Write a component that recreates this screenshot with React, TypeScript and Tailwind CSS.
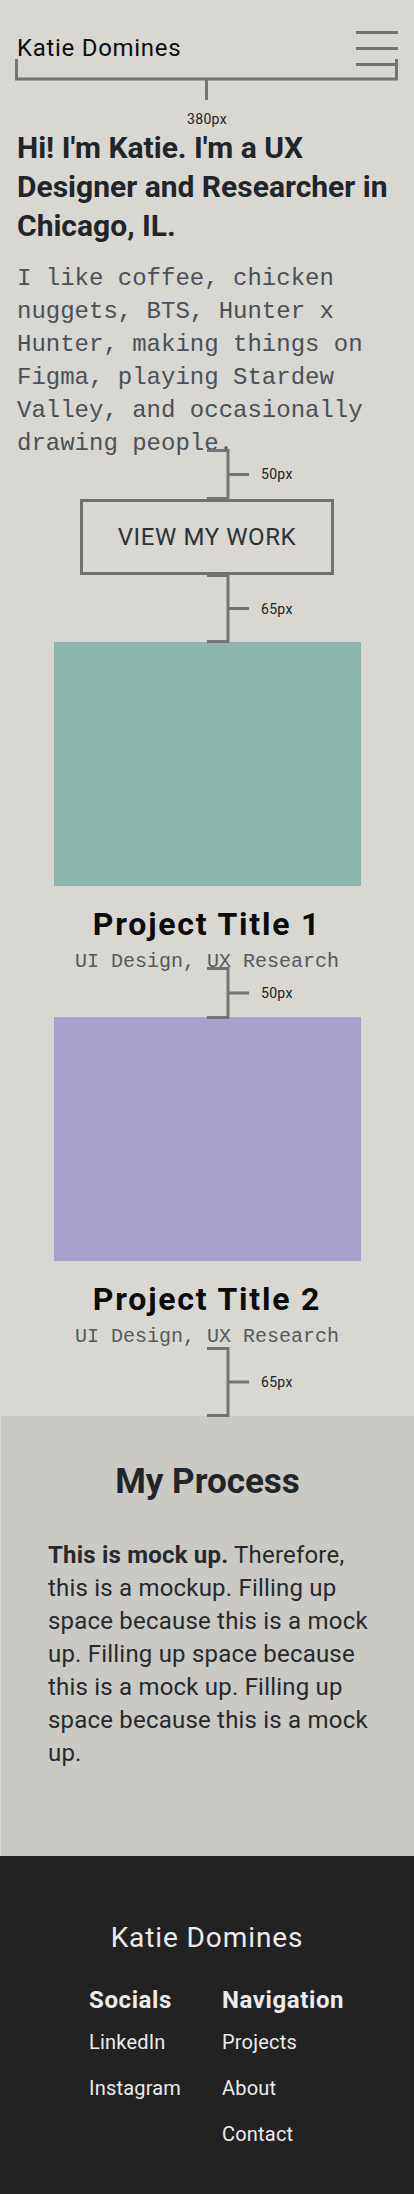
import React from 'react';

// spacing annotation drawn over the gaps of the mockup
const Bracket: React.FC<{ span: number; label: string; className: string }> = ({ span, label, className }) => (
  <div className={`absolute left-[205px] flex items-center ${className}`}>
    <svg width="46" height={span + 3} viewBox={`0 0 46 ${span + 3}`} fill="none" stroke="#747474" strokeWidth="3">
      <path d={`M2 1.5 H23 V${span + 1.5} H2`} />
      <path d={`M23 ${span / 2 + 1.5} H44`} />
    </svg>
    <span className="ml-[10px] text-[14px] leading-[20px] tracking-[0.3px] text-[#222]">{label}</span>
  </div>
);

const Project: React.FC<{ title: string; color: string }> = ({ title, color }) => (
  <div className="flex flex-col items-center">
    <div className={`h-[244px] w-[307px] ${color}`} />
    <h2 className="mt-[18px] text-[32px] leading-[40px] font-bold tracking-[1.8px] text-[#0b0b0b]">{title}</h2>
    <p className="mt-[4px] font-['Liberation_Mono',monospace] text-[20px] leading-[28px] text-[#55595d]">
      UI Design, UX Research
    </p>
  </div>
);

export default function App() {
  return (
    <div className="min-h-[2194px] bg-[#d8d7d2] font-['Roboto',sans-serif] flex flex-col">
      <header className="relative h-[128px] flex justify-between items-start pl-[17px] pr-[16px] pt-[31px]">
        <span className="mt-[1px] text-[24px] leading-[32px] tracking-[0.7px] text-[#0d0d0d]">Katie Domines</span>
        <div className="flex flex-col gap-[13px]">
          <span className="block h-[3px] w-[42px] bg-[#747474]" />
          <span className="block h-[3px] w-[42px] bg-[#747474]" />
          <span className="block h-[3px] w-[42px] bg-[#747474]" />
        </div>
        <svg className="absolute left-[15px] top-[59px]" width="383" height="42" fill="none" stroke="#747474" strokeWidth="3">
          <path d="M1.5 0 V20 H381.5 V0" />
          <path d="M191.5 20 V41" />
        </svg>
        <span className="absolute left-0 right-0 top-[109px] text-center text-[14px] leading-[20px] tracking-[0.3px] text-[#222]">380px</span>
      </header>

      <section className="px-[17px]">
        <h1 className="-mr-[10px] text-[30px] leading-[39px] font-bold text-[#212529]">
          Hi! I'm Katie. I'm a UX<br />
          Designer and Researcher in<br />
          Chicago, IL.
        </h1>
        <p className="mt-[17px] font-['Liberation_Mono',monospace] text-[24px] leading-[33px] text-[#495057]">
          I like coffee, chicken nuggets, BTS, Hunter x Hunter, making things on Figma, playing Stardew Valley, and occasionally drawing people.
        </p>
      </section>

      <div className="relative h-[39px]">
        <Bracket span={48} label="50px" className="-top-[11.5px]" />
      </div>

      <button className="mx-auto flex h-[76px] w-[254px] items-center justify-center border-[3px] border-[#707070] text-[24px] tracking-[0.6px] text-[#2d3238]">
        VIEW MY WORK
      </button>

      <div className="relative h-[67px]">
        <Bracket span={66} label="65px" className="-top-[1px]" />
      </div>

      <Project title="Project Title 1" color="bg-[#8cb5ae]" />

      <div className="relative h-[41px]">
        <Bracket span={49} label="50px" className="-top-[9.5px]" />
      </div>

      <Project title="Project Title 2" color="bg-[#a9a1cb]" />

      <div className="relative h-[65px]">
        <Bracket span={67} label="65px" className="-top-[4.5px]" />
      </div>

      <section className="ml-px h-[440px] bg-[#cac9c4] pt-[44px]">
        <h2 className="text-center text-[35px] leading-[44px] font-bold text-[#212529]">My Process</h2>
        <p className="mt-[35px] pl-[47px] pr-[30px] text-[24px] leading-[33px] tracking-[0.2px] text-[#26292d]">
          <strong className="font-bold">This is mock up.</strong> Therefore,<br />
          this is a mockup. Filling up<br />
          space because this is a mock<br />
          up. Filling up space because<br />
          this is a mock up. Filling up<br />
          space because this is a mock<br />
          up.
        </p>
      </section>

      <footer className="h-[339px] bg-[#222222] pt-[64px] text-[#ececec]">
        <p className="text-center text-[28px] leading-[36px] tracking-[0.9px]">Katie Domines</p>
        <div className="mt-[28px] flex pl-[89px]">
          <div className="w-[133px]">
            <h3 className="text-[24px] leading-[32px] font-bold tracking-[0.6px]">Socials</h3>
            <ul className="mt-[3px] text-[20px] leading-[46px] tracking-[0.2px]">
              <li>LinkedIn</li>
              <li>Instagram</li>
            </ul>
          </div>
          <div>
            <h3 className="text-[24px] leading-[32px] font-bold tracking-[0.6px]">Navigation</h3>
            <ul className="mt-[3px] text-[20px] leading-[46px] tracking-[0.2px]">
              <li>Projects</li>
              <li>About</li>
              <li>Contact</li>
            </ul>
          </div>
        </div>
      </footer>
    </div>
  );
}
